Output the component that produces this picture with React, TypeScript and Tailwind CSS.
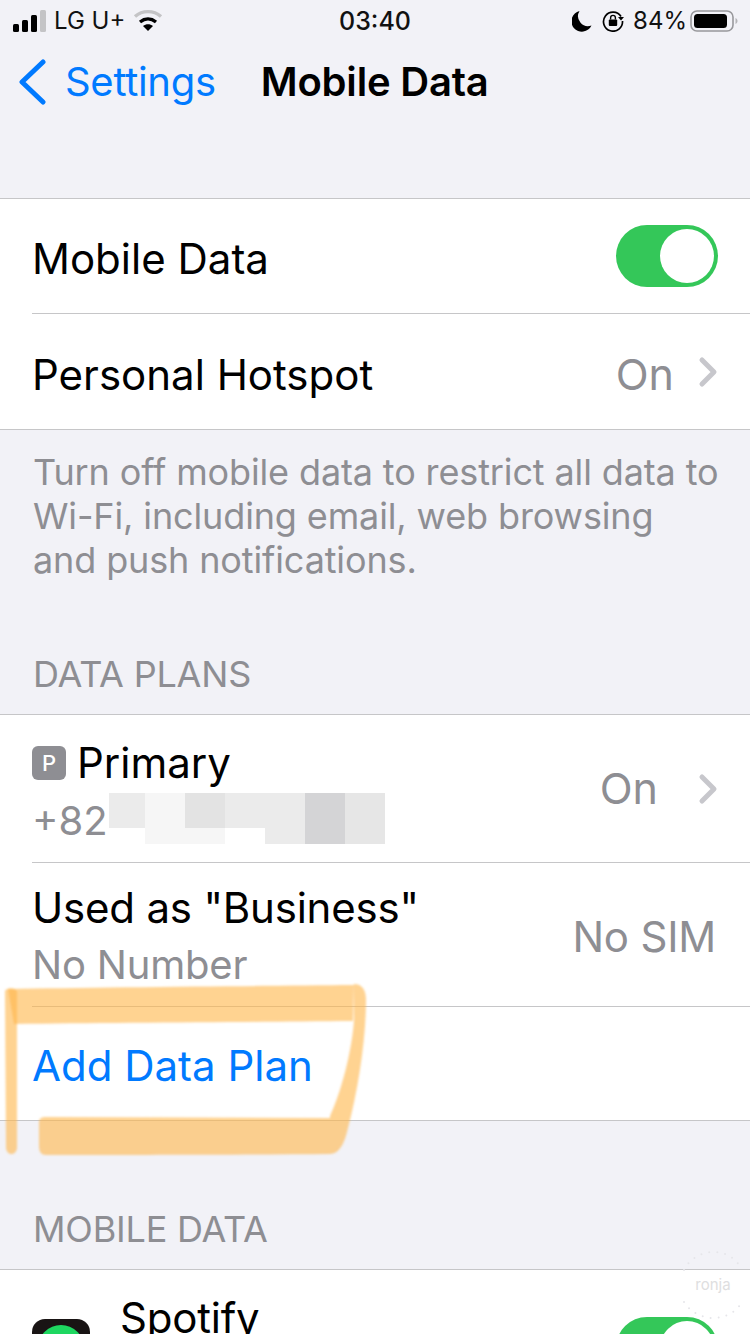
const font = { fontFamily: 'Inter, "Noto Sans", sans-serif' };

const Chevron = () => (
  <svg width="20" height="32" viewBox="0 0 20 32" fill="none">
    <path d="M4 4l12 12L4 28" stroke="#c7c7cc" strokeWidth="5" strokeLinecap="round" strokeLinejoin="round" />
  </svg>
);

const Toggle = () => (
  <div className="flex w-[102px] h-[62px] rounded-full bg-[#34c759] p-[4px] justify-end">
    <div className="w-[54px] h-[54px] rounded-full bg-white" />
  </div>
);

const StatusBar = () => (
  <div className="h-[42px] relative flex items-center justify-between pl-[13px] pr-[12px] text-[24px] text-[#111] leading-none">
    <div className="flex items-center gap-[9px]">
      <svg width="33" height="22" viewBox="0 0 33 22">
        <rect x="0" y="14" width="6" height="8" rx="1.5" fill="#000" />
        <rect x="9" y="10" width="6" height="12" rx="1.5" fill="#000" />
        <rect x="18" y="5" width="6" height="17" rx="1.5" fill="#000" />
        <rect x="27" y="0" width="6" height="22" rx="1.5" fill="#c4c4c6" />
      </svg>
      <span className="-ml-[1px]">LG U+</span>
      <svg width="30" height="24" viewBox="0 0 30 24" fill="none" className="-ml-[1px]">
        <path d="M2 7.5C9.5 1 20.5 1 28 7.5" stroke="#c4c4c6" strokeWidth="3.4" />
        <path d="M7 13C12 9 18 9 23 13" stroke="#000" strokeWidth="3.4" />
        <path d="M15 22l-5-5c3-2.4 7-2.4 10 0z" fill="#000" />
      </svg>
    </div>
    <span className="absolute left-[339px] top-[9px] font-medium text-[25px]">03:40</span>
    <div className="flex items-center gap-[10px]">
      <svg width="20" height="22" viewBox="0 0 20 22">
        <path d="M7.5 1A10.5 10.5 0 1 0 19.5 15.5 10 10 0 0 1 7.5 1z" fill="#000" />
      </svg>
      <svg width="22" height="22" viewBox="0 0 22 22" fill="none">
        <path d="M19 6.5A9.5 9.5 0 1 0 20.5 11" stroke="#000" strokeWidth="1.7" />
        <path d="M16 7h6l-3 3.6z" fill="#000" />
        <rect x="6.8" y="9.5" width="8.4" height="6.5" rx="1" fill="#000" />
        <path d="M8.6 9.5V7.8a2.4 2.4 0 0 1 4.8 0v1.7" stroke="#000" strokeWidth="1.4" />
      </svg>
      <span className="-ml-[1px]">84%</span>
      <svg width="48" height="24" viewBox="0 0 48 24" fill="none" className="-ml-[7px]">
        <rect x="1" y="2" width="42" height="20" rx="6" stroke="#98989c" strokeWidth="1.6" />
        <rect x="4" y="5" width="33" height="14" rx="3.5" fill="#000" />
        <path d="M45.5 9v6c1.2-.5 2-1.700 2-3s-.8-2.500-2-3z" fill="#b5b5b8" />
      </svg>
    </div>
  </div>
);

const Annotation = () => (
  <svg className="absolute left-0 top-0 pointer-events-none" width="750" height="1334" viewBox="0 0 750 1334">
    <defs>
      <filter id="soft">
        <feGaussianBlur stdDeviation="1.2" />
      </filter>
    </defs>
    <g fill="#ffb54a" fillOpacity="0.6" filter="url(#soft)">
      <path d="M8 989C100 987 260 986 354 985L353 1021C250 1022 110 1023 14 1024z" />
      <path d="M5 992C4 988 16 986 17 992L17 1148C16 1156 7 1156 6 1148z" />
      <path d="M354 984C362 984 366 990 366 1000C366 1040 358 1090 348 1128C344 1146 338 1154 330 1154L330 1116C342 1090 352 1050 354 1020z" />
      <path d="M39 1122C39 1118 42 1117 46 1117L330 1118L330 1154C240 1155 120 1155 46 1155C40 1155 39 1150 39 1146z" />
    </g>
  </svg>
);

const Watermark = () => (
  <svg className="absolute left-[680px] top-[1250px] pointer-events-none" width="70" height="72" viewBox="0 0 70 72" fill="none">
    <path d="M4 20C10 8 22 2 33 2C46 2 56 8 62 20" stroke="#e6e6ea" strokeWidth="2" strokeLinecap="round" strokeDasharray="0 8" />
    <path d="M4 52C10 62 22 68 33 68C46 68 56 62 62 52" stroke="#e6e6ea" strokeWidth="2" strokeLinecap="round" strokeDasharray="0 8" />
    <text x="33" y="40" textAnchor="middle" fontSize="15" fill="#dedee0" fontFamily="Inter, sans-serif">ronja</text>
  </svg>
);

export default function App() {
  return (
    <div className="relative w-[750px] h-[1334px] overflow-hidden bg-[#f2f2f7]" style={font}>
      <StatusBar />

      {/* Nav */}
      <div className="h-[156px] pt-[17px] pl-[18px]">
        <div className="flex items-center h-[46px]">
          <svg width="28" height="46" viewBox="0 0 28 46" fill="none">
            <path d="M25 3L4 23l21 20" stroke="#007aff" strokeWidth="5" strokeLinecap="round" strokeLinejoin="round" />
          </svg>
          <span className="ml-[19px] text-[40px] leading-none text-[#007aff] tracking-[-0.3px]">Settings</span>
          <span className="ml-[45px] text-[40px] leading-none font-semibold text-black tracking-[-0.2px]">Mobile Data</span>
        </div>
      </div>

      {/* First group */}
      <div className="bg-white border-y border-[#c6c6c8]">
        <div className="ml-[32px] h-[115px] border-b border-[#c6c6c8] flex items-center justify-between pr-[32px] text-[42px] text-black">
          <span className="pt-[4px]">Mobile Data</span>
          <Toggle />
        </div>
        <div className="ml-[32px] h-[115px] flex items-center justify-between pr-[32px] text-[42px] text-black">
          <span className="pt-[6px]">Personal Hotspot</span>
          <div className="flex items-center gap-[24px] text-[#8e8e93] text-[43px]">
            <span className="pt-[6px]">On</span>
            <Chevron />
          </div>
        </div>
      </div>

      <div className="pl-[33px] pt-[20px] text-[36px] leading-[44px] text-[#8e8e93] tracking-[-0.13px] whitespace-nowrap">
        <div>Turn off mobile data to restrict all data to</div>
        <div>Wi-Fi, including email, web browsing</div>
        <div>and push notifications.</div>
      </div>

      <div className="px-[33px] pt-[70px] h-[132px] text-[36px] leading-[44px] text-[#8e8e93] tracking-[-0.2px]">DATA PLANS</div>

      {/* Data plans */}
      <div className="bg-white border-y border-[#c6c6c8]">
        <div className="ml-[32px] h-[148px] border-b border-[#c6c6c8] flex items-center justify-between pr-[32px]">
          <div className="pt-[6px]">
            <div className="flex items-center gap-[11px] text-[42px] leading-[48px] text-black">
              <span className="w-[34px] h-[34px] rounded-[6px] bg-[#8e8e93] text-white text-[22px] font-medium flex items-center justify-center">P</span>
              <span>Primary</span>
            </div>
            <div className="relative text-[40px] leading-[48px] text-[#8e8e93] mt-[10px]">
              +82
              <svg className="absolute left-[77px] -top-[4px]" width="276" height="51" viewBox="0 0 276 51">
                <rect x="0" y="0" width="36" height="35" fill="#ebebeb" />
                <rect x="36" y="0" width="40" height="51" fill="#f6f6f6" />
                <rect x="76" y="0" width="40" height="35" fill="#e3e3e3" />
                <rect x="76" y="35" width="40" height="16" fill="#f6f6f6" />
                <rect x="116" y="0" width="40" height="35" fill="#ebebeb" />
                <rect x="156" y="0" width="40" height="51" fill="#ebebeb" />
                <rect x="196" y="0" width="40" height="51" fill="#d4d4d6" />
                <rect x="236" y="0" width="40" height="51" fill="#e6e6e6" />
              </svg>
            </div>
          </div>
          <div className="flex items-center gap-[40px] text-[43px] text-[#8e8e93]">
            <span>On</span>
            <Chevron />
          </div>
        </div>
        <div className="ml-[32px] h-[144px] border-b border-[#c6c6c8] flex items-center justify-between pr-[34px]">
          <div className="pt-[4px]">
            <div className="text-[42px] leading-[48px] text-black tracking-[-0.2px]">Used as "Business"</div>
            <div className="text-[40px] leading-[48px] text-[#8e8e93] mt-[9px] tracking-[-0.2px]">No Number</div>
          </div>
          <span className="pt-[4px] text-[42px] text-[#8e8e93] tracking-[-0.2px]">No SIM</span>
        </div>
        <div className="ml-[32px] h-[113px] flex items-center text-[42px] text-[#007aff]">
          <span className="pt-[4px]">Add Data Plan</span>
        </div>
      </div>

      <div className="px-[33px] pt-[86px] h-[148px] text-[36px] leading-[44px] text-[#8e8e93] tracking-[-0.2px]">MOBILE DATA</div>

      {/* Mobile data apps */}
      <div className="bg-white border-t border-[#c6c6c8]">
        <div className="pl-[32px] pr-[32px] flex justify-between">
          <div className="flex">
            <div className="mt-[49px] w-[58px] h-[58px] rounded-[13px] bg-[#191414] flex justify-center pt-[6px]">
              <div className="w-[46px] h-[46px] rounded-full bg-[#1ed760]" />
            </div>
            <div className="ml-[30px] mt-[24px] text-[42px] leading-[48px] text-black tracking-[-0.2px]">Spotify</div>
          </div>
          <div className="mt-[47px]">
            <Toggle />
          </div>
        </div>
      </div>

      <Annotation />
      <Watermark />
    </div>
  );
}
